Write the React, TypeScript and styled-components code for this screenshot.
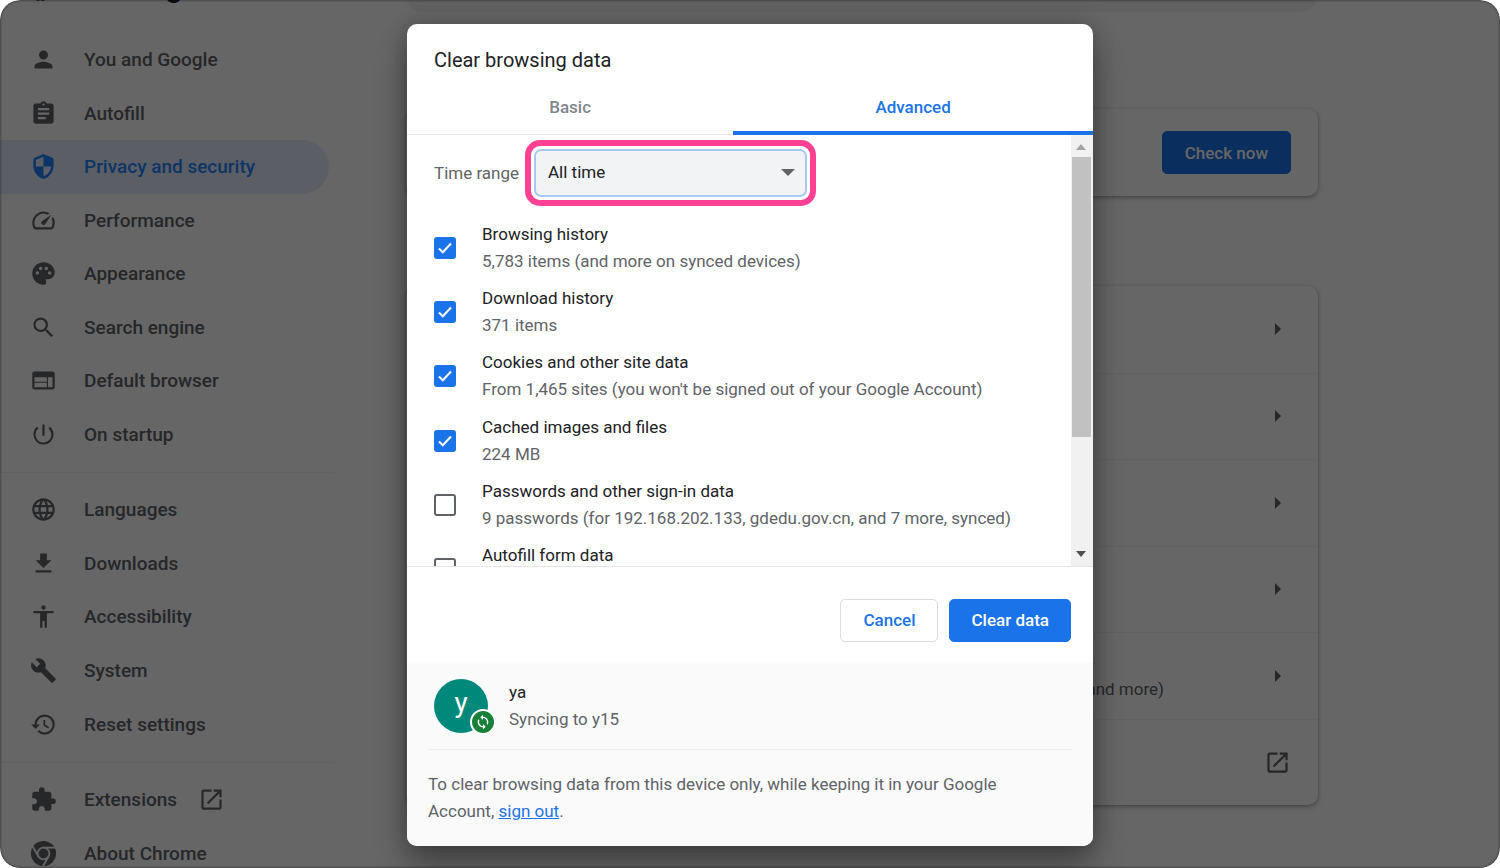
import React from "react";
import styled, { createGlobalStyle } from "styled-components";
import {
  MdPerson, MdAssignment, MdSpeed, MdPalette, MdSearch, MdWeb,
  MdPowerSettingsNew, MdLanguage, MdGetApp, MdAccessibility, MdBuild,
  MdRestore, MdExtension, MdOpenInNew, MdSync,
} from "react-icons/md";

const GlobalStyle = createGlobalStyle`
  * { box-sizing: border-box; }
  body { margin: 0; background: #fff; font-family: Roboto, "Liberation Sans", sans-serif; font-size: 17px; color: #202124; }
  button, select { font: inherit; }
`;

const Frame = styled.div`
  position: relative;
  height: 100vh;
  overflow: hidden;
  border-radius: 20px;
  background: #fff;
`;

const Header = styled.header`
  display: flex;
  align-items: flex-end;
  height: 12px;
  margin-bottom: 21px;
`;

const Brand = styled.div`
  display: flex;
  align-items: flex-end;
  flex: 0 0 406px;
  padding: 0 0 10px 27px;
  gap: 30px;
`;

const AppTitle = styled.h1`
  margin: 0;
  font-size: 31px;
  font-weight: 500;
  line-height: 31px;
`;

const SearchBox = styled.input`
  flex: 0 1 911px;
  height: 54px;
  padding: 0 54px;
  border: 0;
  border-radius: 16px;
  background: #f3f3f4;
`;

const Body = styled.div`
  display: flex;
  align-items: flex-start;
`;

const Sidebar = styled.nav`
  flex: 0 0 335px;
`;

const NavGroup = styled.ul<{ $rows: number }>`
  display: grid;
  grid-auto-rows: 1fr;
  min-height: ${(p) => (p.$rows === 8 ? 428 : p.$rows === 5 ? 268 : 107)}px;
  margin: 0;
  padding: 0;
  list-style: none;

  & + & {
    margin-top: 11px;
    padding-top: 10px;
    border-top: 1px solid #f2f2f2;
    box-sizing: content-box;
  }
`;

const NavLink = styled.a<{ $selected?: boolean }>`
  display: flex;
  align-items: center;
  gap: 27px;
  height: 100%;
  margin-right: 6px;
  padding-left: 30px;
  border-radius: 0 27px 27px 0;
  background: ${(p) => (p.$selected ? "#e3ebfa" : "transparent")};
  color: ${(p) => (p.$selected ? "#1f86ff" : "#5f6368")};
  font-size: 19px;
  font-weight: 500;
  text-decoration: none;
`;

const NavLabel = styled.span`
  display: flex;
  align-items: center;
  gap: 21px;
`;

const Main = styled.main`
  flex: 1;
  padding: 76px 182px 0 71px;
`;

const Card = styled.section`
  border-radius: 10px;
  background: #fff;
  box-shadow: 0 1px 3px rgba(60, 64, 67, 0.3), 0 2px 5px 1px rgba(60, 64, 67, 0.2);
`;

const SafetyCard = styled(Card)`
  display: flex;
  align-items: center;
  justify-content: flex-end;
  height: 87px;
  margin-bottom: 90px;
  padding: 0 27px;
`;

const RowsCard = styled(Card)`
  display: grid;
  grid-auto-rows: 1fr;
  min-height: 519px;
`;

const LinkRow = styled.a`
  display: flex;
  align-items: center;
  justify-content: flex-end;
  gap: 100px;
  padding: 0 27px;
  color: inherit;
  text-decoration: none;

  & + & { border-top: 1px solid #f2f2f2; }
`;

const RowNote = styled.span`
  padding-top: 27px;
  color: #5f6368;
  line-height: 27px;
`;

const Trailing = styled.span`
  display: flex;
  justify-content: center;
  width: 27px;
  color: #5f6368;
`;

const Line = styled.span<{ $muted?: boolean }>`
  display: block;
  line-height: 27px;
  color: ${(p) => (p.$muted ? "#5f6368" : "#202124")};
`;

const Button = styled.button<{ $primary?: boolean; $wide?: boolean }>`
  min-width: 98px;
  height: 43px;
  padding: 0 ${(p) => (p.$wide ? 22 : 21)}px;
  border: 1px solid ${(p) => (p.$primary ? "#1a73e8" : "#dadce0")};
  border-radius: 5px;
  background: ${(p) => (p.$primary ? "#1a73e8" : "#fff")};
  color: ${(p) => (p.$primary ? "#fff" : "#1a73e8")};
  font-weight: 500;
`;

const Scrim = styled.div`
  position: absolute;
  inset: 0;
  display: flex;
  align-items: center;
  justify-content: center;
  padding-top: 1px;
  border-radius: 20px;
  background: rgba(0, 0, 0, 0.6);
  box-shadow: inset 0 0 3px rgba(0, 0, 0, 0.6);
`;

const Dialog = styled.div`
  display: flex;
  flex-direction: column;
  width: 686px;
  max-width: 100%;
  overflow: hidden;
  border-radius: 10px;
  background: #fff;
`;

const DialogShadow = styled.div`
  border-radius: 10px;
  box-shadow: 0 0 22px rgba(0, 0, 0, 0.24), 0 22px 32px rgba(0, 0, 0, 0.3);
`;

const DialogTitle = styled.h2`
  margin: 0;
  padding: 24px 27px 8px;
  font-size: 20px;
  font-weight: 400;
  line-height: 25px;
`;

const Tabs = styled.div`
  display: flex;
  border-bottom: 1px solid #e4e4e4;
`;

const Tab = styled.button<{ $selected?: boolean }>`
  flex: 1 1 auto;
  height: 54px;
  margin-bottom: -1px;
  padding: 2px 0 0;
  border: 0;
  border-bottom: 4px solid ${(p) => (p.$selected ? "#1a73e8" : "transparent")};
  border-radius: 4px 4px 0 0;
  background: none;
  color: ${(p) => (p.$selected ? "#1a73e8" : "#80868b")};
  font-weight: 500;
`;

const ScrollArea = styled.div`
  display: flex;
  height: 432px;
  border-bottom: 1px solid #e4e4e4;
  overflow: hidden;
`;

const ScrollContent = styled.div`
  flex: 1;
  padding: 14px 27px 0;
`;

const ScrollTrack = styled.div`
  display: flex;
  flex-direction: column;
  align-items: center;
  width: 22px;
  padding-right: 2px;
  background: #f1f1f1;
`;

const ScrollThumb = styled.div`
  width: 19px;
  height: 280px;
  margin-bottom: auto;
  background: #c1c1c1;
`;

const ScrollStep = styled.svg`
  flex: none;
  width: 20px;
  height: 22px;
`;

const RangeRow = styled.div`
  display: flex;
  align-items: center;
  justify-content: space-between;
  width: 373px;
  margin-bottom: 24px;
  color: #5f6368;
`;

const SelectWrap = styled.div`
  position: relative;
  width: 273px;

  &::after {
    content: "";
    position: absolute;
    inset: -9px;
    border: 6px solid #ff4093;
    border-radius: 15px;
    pointer-events: none;
  }
`;

const Select = styled.select`
  display: block;
  appearance: none;
  width: 100%;
  height: 48px;
  padding: 0 12px 2px;
  border: 2px solid #a8c7f3;
  border-radius: 7px;
  background: #f1f3f4;
  color: #202124;
`;

const SelectArrow = styled.svg`
  position: absolute;
  right: 12px;
  top: 20px;
  width: 14px;
  height: 7px;
  fill: #5f6368;
  pointer-events: none;
`;

const Options = styled.div`
  display: grid;
  grid-auto-rows: 1fr;
  min-height: 386px;
`;

const Option = styled.label`
  display: flex;
  align-items: flex-start;
`;

const CheckHolder = styled.span`
  position: relative;
  flex: 0 0 48px;
  padding-top: 16px;
`;

const CheckInput = styled.input`
  display: block;
  appearance: none;
  width: 22px;
  height: 22px;
  margin: 0;
  border: 2px solid #5f6368;
  border-radius: 3px;

  &:checked {
    border-color: #1a73e8;
    background: #1a73e8;
  }
`;

const Tick = styled.svg`
  position: absolute;
  left: 3px;
  top: 19px;
  width: 16px;
  height: 16px;
  fill: none;
  stroke: #fff;
  stroke-width: 2;
  pointer-events: none;
`;

const Actions = styled.div`
  display: flex;
  justify-content: flex-end;
  gap: 11px;
  padding: 32px 22px 21px;
`;

const Footer = styled.footer`
  padding: 16px 21px 21px;
  background: #fafafa;
  color: #5f6368;
`;

const Account = styled.div`
  display: flex;
  align-items: center;
  gap: 21px;
  padding: 0 0 16px 6px;
  border-bottom: 1px solid #ececec;
`;

const Avatar = styled.div`
  position: relative;
  width: 54px;
  height: 54px;
  border-radius: 50%;
  background: #00897b;
  color: #fff;
  font-size: 28px;
  line-height: 48px;
  text-align: center;
`;

const SyncBadge = styled.span`
  position: absolute;
  right: -8px;
  bottom: -2px;
  display: flex;
  align-items: center;
  justify-content: center;
  width: 26px;
  height: 26px;
  border: 2px solid #fff;
  border-radius: 50%;
  background: #188038;
`;

const SignOutNote = styled.p`
  margin: 0;
  padding: 21px 32px 0 0;
  line-height: 27px;

  a { color: #1a73e8; }
`;

const ChromeMark = () => (
  <svg width="27" height="27" viewBox="0 0 24 24" aria-hidden="true">
    <circle cx="12" cy="12" r="11.2" fill="currentColor" />
    <g fill="none" stroke="#fff" strokeWidth="1.6">
      <circle cx="12" cy="12" r="5.2" />
      <path d="M12 6.8h12" />
      <path d="M12 6.8h12" transform="rotate(120 12 12)" />
      <path d="M12 6.8h12" transform="rotate(240 12 12)" />
    </g>
  </svg>
);

const ShieldIcon = () => (
  <svg width="27" height="27" viewBox="0 0 24 24" fill="currentColor" fillRule="evenodd" aria-hidden="true">
    <path d="M12 1.200c-.4 0-.7.1-1 .2L4.200 4.200C3.500 4.500 3 5.200 3 6v5c0 5.600 3.800 10.700 9 12 5.200-1.300 9-6.400 9-12V6c0-.8-.5-1.500-1.200-1.800L13 1.400c-.3-.1-.6-.2-1-.2zM12 12h6.800c-.5 4.100-3.100 7.500-6.800 8.700V12H5.200V6.200L12 3.400V12z" />
  </svg>
);

const navGroups = [
  [
    { label: "You and Google", icon: <MdPerson size={27} /> },
    { label: "Autofill", icon: <MdAssignment size={27} /> },
    { label: "Privacy and security", icon: <ShieldIcon />, selected: true },
    { label: "Performance", icon: <MdSpeed size={27} /> },
    { label: "Appearance", icon: <MdPalette size={27} /> },
    { label: "Search engine", icon: <MdSearch size={27} /> },
    { label: "Default browser", icon: <MdWeb size={27} /> },
    { label: "On startup", icon: <MdPowerSettingsNew size={27} /> },
  ],
  [
    { label: "Languages", icon: <MdLanguage size={27} /> },
    { label: "Downloads", icon: <MdGetApp size={27} /> },
    { label: "Accessibility", icon: <MdAccessibility size={27} /> },
    { label: "System", icon: <MdBuild size={27} /> },
    { label: "Reset settings", icon: <MdRestore size={27} /> },
  ],
  [
    { label: "Extensions", icon: <MdExtension size={27} />, external: true },
    { label: "About Chrome", icon: <ChromeMark /> },
  ],
] as { label: string; icon: React.ReactNode; selected?: boolean; external?: boolean }[][];

const settingRows: { title: string; note?: string; external?: boolean }[] = [
  { title: "Clear browsing data" },
  { title: "Privacy Guide" },
  { title: "Cookies and other site data" },
  { title: "Security" },
  { title: "Site Settings", note: "and more)" },
  { title: "Privacy Sandbox", external: true },
];

const options = [
  { title: "Browsing history", text: "5,783 items (and more on synced devices)", checked: true },
  { title: "Download history", text: "371 items", checked: true },
  { title: "Cookies and other site data", text: "From 1,465 sites (you won't be signed out of your Google Account)", checked: true },
  { title: "Cached images and files", text: "224 MB", checked: true },
  { title: "Passwords and other sign-in data", text: "9 passwords (for 192.168.202.133, gdedu.gov.cn, and 7 more, synced)", checked: false },
  { title: "Autofill form data", text: "", checked: false },
];

export default function App() {
  return (
    <Frame>
      <GlobalStyle />
      <Header>
        <Brand>
          <ChromeMark />
          <AppTitle>Settings</AppTitle>
        </Brand>
        <SearchBox type="search" aria-label="Search settings" />
      </Header>
      <Body>
        <Sidebar>
          {navGroups.map((group, g) => (
            <NavGroup key={g} $rows={group.length}>
              {group.map((item) => (
                <li key={item.label}>
                  <NavLink href="#" $selected={item.selected}>
                    {item.icon}
                    <NavLabel>
                      {item.label}
                      {item.external && <MdOpenInNew size={27} />}
                    </NavLabel>
                  </NavLink>
                </li>
              ))}
            </NavGroup>
          ))}
        </Sidebar>
        <Main>
          <SafetyCard>
            <Button $primary $wide>Check now</Button>
          </SafetyCard>
          <RowsCard>
            {settingRows.map((row) => (
              <LinkRow href="#" key={row.title} aria-label={row.title}>
                {row.note && <RowNote>{row.note}</RowNote>}
                <Trailing>
                  {row.external ? (
                    <MdOpenInNew size={27} />
                  ) : (
                    <svg width="6" height="12" viewBox="0 0 6 12" fill="currentColor" aria-hidden="true">
                      <path d="M0 0l6 6-6 6z" />
                    </svg>
                  )}
                </Trailing>
              </LinkRow>
            ))}
          </RowsCard>
        </Main>
      </Body>
      <Scrim>
        <DialogShadow>
          <Dialog role="dialog" aria-labelledby="dialog-title">
            <DialogTitle id="dialog-title">Clear browsing data</DialogTitle>
            <Tabs role="tablist">
              <Tab role="tab">Basic</Tab>
              <Tab role="tab" $selected aria-selected>Advanced</Tab>
            </Tabs>
            <ScrollArea>
              <ScrollContent>
                <RangeRow>
                  <label htmlFor="range">Time range</label>
                  <SelectWrap>
                    <Select id="range" defaultValue="all">
                      <option value="all">All time</option>
                      <option value="hour">Last hour</option>
                    </Select>
                    <SelectArrow viewBox="0 0 14 7"><path d="M0 0h14L7 7z" /></SelectArrow>
                  </SelectWrap>
                </RangeRow>
                <Options>
                  {options.map((o) => (
                    <Option key={o.title}>
                      <CheckHolder>
                        <CheckInput type="checkbox" defaultChecked={o.checked} />
                        {o.checked && <Tick viewBox="0 0 16 16"><path d="M2 8.500l3.800 3.700L14 3.500" /></Tick>}
                      </CheckHolder>
                      <span>
                        <Line>{o.title}</Line>
                        {o.text && <Line $muted>{o.text}</Line>}
                      </span>
                    </Option>
                  ))}
                </Options>
              </ScrollContent>
              <ScrollTrack aria-hidden="true">
                <ScrollStep viewBox="0 0 20 22"><path d="M5 15h10l-5-6z" fill="#a3a3a3" /></ScrollStep>
                <ScrollThumb />
                <ScrollStep viewBox="0 0 20 22"><path d="M5 7h10l-5 6z" fill="#505050" /></ScrollStep>
              </ScrollTrack>
            </ScrollArea>
            <Actions>
              <Button>Cancel</Button>
              <Button $primary>Clear data</Button>
            </Actions>
            <Footer>
              <Account>
                <Avatar>
                  y
                  <SyncBadge><MdSync size={16} /></SyncBadge>
                </Avatar>
                <span>
                  <Line>ya</Line>
                  <Line $muted>Syncing to y15</Line>
                </span>
              </Account>
              <SignOutNote>
                To clear browsing data from this device only, while keeping it in your Google Account,{" "}
                <a href="#">sign out</a>.
              </SignOutNote>
            </Footer>
          </Dialog>
        </DialogShadow>
      </Scrim>
    </Frame>
  );
}
